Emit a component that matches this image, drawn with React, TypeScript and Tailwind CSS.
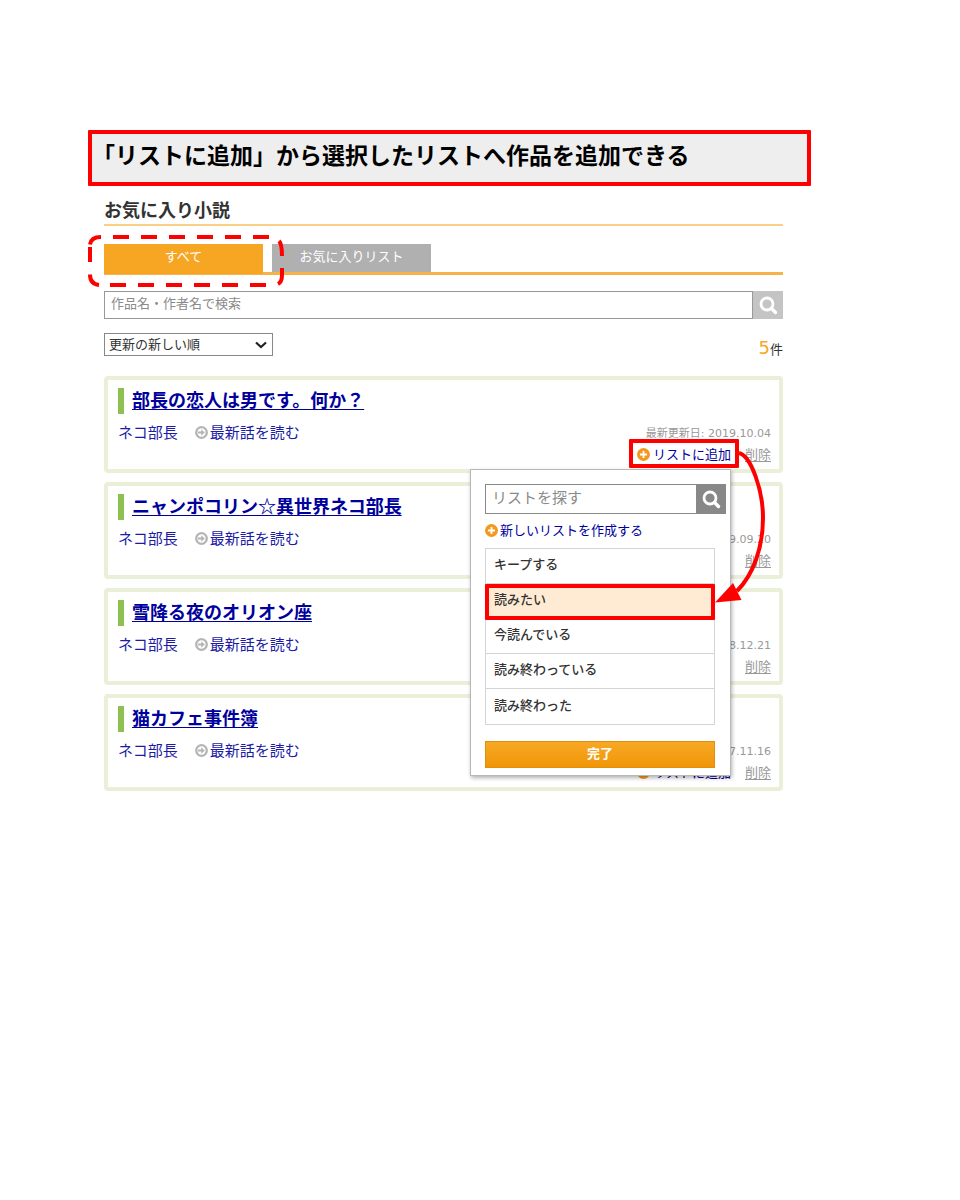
import React from "react";

type Novel = { title: string; author: string; date: string };

const novels: Novel[] = [
  { title: "部長の恋人は男です。何か？", author: "ネコ部長", date: "2019.10.04" },
  { title: "ニャンポコリン☆異世界ネコ部長", author: "ネコ部長", date: "2019.09.20" },
  { title: "雪降る夜のオリオン座", author: "ネコ部長", date: "2018.12.21" },
  { title: "猫カフェ事件簿", author: "ネコ部長", date: "2017.11.16" },
];

const lists = ["キープする", "読みたい", "今読んでいる", "読み終わっている", "読み終わった"];
const selectedList = "読みたい";

function SearchIcon() {
  return (
    <svg viewBox="0 0 20 20" className="size-5" fill="none" stroke="currentColor" aria-hidden="true">
      <circle cx="9" cy="9" r="6" strokeWidth="2.800" />
      <path d="M13.5 13.5 17.500 17.500" strokeWidth="3.400" strokeLinecap="round" />
    </svg>
  );
}

function PlusIcon() {
  return (
    <svg viewBox="0 0 13 13" className="size-[13px] shrink-0" aria-hidden="true">
      <circle cx="6.5" cy="6.5" r="6.5" fill="#f29a1f" />
      <path d="M6.5 3v7M3 6.5h7" stroke="#fff" strokeWidth="1.800" />
    </svg>
  );
}

function ArrowIcon() {
  return (
    <svg viewBox="0 0 13 13" className="size-[13px] shrink-0" fill="none" aria-hidden="true">
      <circle cx="6.5" cy="6.5" r="5.300" fill="#fff" stroke="#b5b5b5" strokeWidth="2.300" />
      <path d="M3 6.5h4.500" stroke="#b5b5b5" strokeWidth="2" />
      <path d="M6.200 3.300 9.800 6.5 6.200 9.700z" fill="#b5b5b5" />
    </svg>
  );
}

function TabHighlight() {
  return (
    <svg
      viewBox="0 0 196 52"
      className="pointer-events-none absolute -top-[9px] -left-4 h-[52px] w-[196px]"
      fill="none"
      stroke="#ff0000"
      strokeWidth="4"
      aria-hidden="true"
    >
      <path d="M2 9.5Q3 2 13 2" />
      <path d="M25 2h16M53 2h16M81 2h16M109 2h16M137 2h16M165 2h16" />
      <path d="M191 6Q194 9 194 21M194 33v7Q194 47 190 49" />
      <path d="M22 50h16M50 50h16M78 50h16M106 50h16M134 50h16M162 50h16" />
      <path d="M2 12v15M2 39.500Q2 49 11 50" />
    </svg>
  );
}

function ListPopup() {
  return (
    <div className="absolute top-[25px] right-0 z-10 w-[261px] border border-[#b8b8b8] bg-white pt-[14px] pr-1 pb-[7px] pl-[14px] shadow-[1px_2px_4px_rgba(0,0,0,0.3)]">
      <form className="flex h-[30px]" onSubmit={(e) => e.preventDefault()}>
        <input
          type="text"
          aria-label="リストを探す"
          placeholder="リストを探す"
          className="min-w-0 flex-1 border border-r-0 border-[#888] bg-white px-1.5 pb-1 text-[15px] leading-5 placeholder:text-[#8a8a8a] focus:outline-none"
        />
        <button type="submit" aria-label="リストを検索" className="flex w-[30px] items-center justify-center bg-[#888] text-white">
          <SearchIcon />
        </button>
      </form>
      <button type="button" className="mt-1.5 mb-2 flex items-center gap-0.5 text-[13px] leading-5 text-[#00009c]">
        <PlusIcon />
        新しいリストを作成する
      </button>
      <ul className="mr-[11px] border border-[#d5d5d5] text-[13px] font-medium text-[#333]">
        {lists.map((name) => (
          <li key={name} className="relative h-[35px] border-b border-[#d5d5d5] last:border-b-0">
            <button
              type="button"
              className={
                name === selectedList
                  ? "block h-full w-full bg-[#ffebd3] px-2 pb-1 text-left leading-5"
                  : "block h-full w-full px-2 pb-1 text-left leading-5"
              }
            >
              {name}
            </button>
            {name === selectedList && (
              <span className="pointer-events-none absolute -inset-x-px top-0 -bottom-0.5 z-10 rounded-[1px] border-4 border-[#ff0000]" />
            )}
          </li>
        ))}
      </ul>
      <div className="mt-4 mr-[11px]">
        <button
          type="button"
          className="block h-[27px] w-full border border-[#e08e10] bg-linear-to-b from-[#f7a823] to-[#f19604] pb-1 text-center text-[13px] leading-5 font-bold text-white"
        >
          完了
        </button>
      </div>
    </div>
  );
}

function AddToList({ open }: { open: boolean }) {
  return (
    <div className="relative">
      <button type="button" className="flex h-5 items-center gap-[3px] text-[13px] leading-5 text-[#00009c]">
        <PlusIcon />
        リストに追加
      </button>
      {open && (
        <>
          <ListPopup />
          <span className="pointer-events-none absolute -inset-x-2 -top-[5px] -bottom-1 z-20 rounded-[1px] border-4 border-[#ff0000]" />
          <svg
            viewBox="0 0 56 160"
            className="pointer-events-none absolute top-1 -right-10 z-20 h-[160px] w-[56px]"
            fill="none"
            aria-hidden="true"
          >
            <path d="M24 5C36 8 48 42 48 70C48 100 38 127 22 143" stroke="#ff0000" strokeWidth="4" />
            <path d="M0 154.500 18 135 26.500 152z" fill="#ff0000" />
          </svg>
        </>
      )}
    </div>
  );
}

function NovelCard({ novel, open }: { novel: Novel; open: boolean }) {
  return (
    <li className="rounded-sm border-4 border-[#eaf0d8] bg-white pt-2 pr-2 pb-[5px] pl-[10px]">
      <h2 className="border-l-6 border-[#8cc152] pb-1 pl-2 text-[18px] leading-[22px] font-bold">
        <a href="#novel" className="text-[#00009c] underline decoration-1 underline-offset-2">
          {novel.title}
        </a>
      </h2>
      <div className="flex items-start justify-between">
        <div className="mt-2 flex items-center text-[15px] leading-5 text-[#1c1ca6]">
          <a href="#author">{novel.author}</a>
          <a href="#latest" className="ml-[17px] flex items-center gap-0.5">
            <ArrowIcon />
            最新話を読む
          </a>
        </div>
        <div className="mt-[11px] flex flex-col items-end gap-0.5">
          <p className="font-['DejaVu_Sans','Noto_Sans_CJK_JP',sans-serif] text-[11px] leading-[17px] text-[#999]">
            最新更新日: {novel.date}
          </p>
          <div className="flex h-5 items-center gap-[14px]">
            <AddToList open={open} />
            <button type="button" className="text-[13px] leading-5 text-[#999] underline underline-offset-2">
              削除
            </button>
          </div>
        </div>
      </div>
    </li>
  );
}

export default function App() {
  return (
    <main className="min-h-screen bg-white pt-[130px] pr-[149px] pb-10 pl-[88px] font-['Noto_Sans_CJK_JP',sans-serif] text-[#333]">
      <p className="h-[56px] rounded-[1px] border-4 border-[#ff0000] bg-[#eeeeee] text-[23px] leading-10 font-bold text-black">
        「リストに追加」から選択したリストへ作品を追加できる
      </p>

      <section className="mt-2.5 pr-7 pl-4">
        <h1 className="border-b-2 border-[#fbcf85] pb-0.5 text-[18px] leading-[26px] font-bold">お気に入り小説</h1>

        <nav className="relative mt-[18px] flex items-end gap-[9px] border-b-3 border-[#f8b24a] text-[13px] leading-5 text-white">
          <a href="#all" className="-mb-0.5 h-[30px] w-[159px] bg-[#f6a623] pt-0.5 text-center">
            すべて
          </a>
          <a href="#lists" className="h-7 w-[159px] bg-[#b0b0b0] pt-0.5 text-center">
            お気に入りリスト
          </a>
          <TabHighlight />
        </nav>

        <form className="mt-4 flex h-7" onSubmit={(e) => e.preventDefault()}>
          <input
            type="text"
            aria-label="作品名・作者名で検索"
            placeholder="作品名・作者名で検索"
            className="min-w-0 flex-1 border border-[#999] bg-white px-1.5 pb-1 text-[13px] leading-5 placeholder:text-[#8a8a8a] focus:outline-none"
          />
          <button type="submit" aria-label="検索" className="flex w-[30px] items-center justify-center bg-[#c4c4c4] text-white">
            <SearchIcon />
          </button>
        </form>

        <div className="mt-[14px] flex items-start justify-between">
          <div className="relative">
            <select
              aria-label="並び順"
              className="block h-[23px] w-[169px] appearance-none border border-[#888] bg-white pb-0.5 pl-1 text-[13px] leading-5 text-[#333]"
            >
              <option>更新の新しい順</option>
            </select>
            <svg
              viewBox="0 0 12 8"
              className="pointer-events-none absolute top-2 right-1.5 h-2 w-3"
              fill="none"
              stroke="#222"
              strokeWidth="2.200"
              aria-hidden="true"
            >
              <path d="M1 1.500 6 6l5-4.500" />
            </svg>
          </div>
          <p className="h-[30px] text-[13px] leading-[30px]">
            <span className="font-['DejaVu_Sans',sans-serif] text-[18px] text-[#f6a623]">5</span>件
          </p>
        </div>

        <ul className="mt-[13px] flex flex-col gap-[9px]">
          {novels.map((novel, i) => (
            <NovelCard key={novel.title} novel={novel} open={i === 0} />
          ))}
        </ul>
      </section>
    </main>
  );
}
